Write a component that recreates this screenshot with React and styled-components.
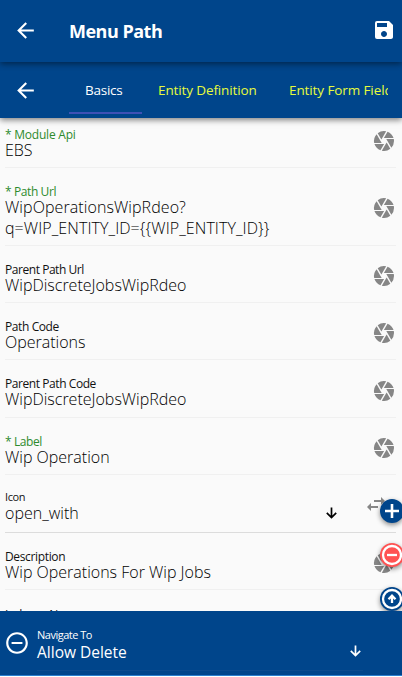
import React from 'react';
import styled, { createGlobalStyle } from 'styled-components';
import { MdArrowBack, MdSave, MdCamera, MdSwapHoriz, MdRemoveCircleOutline } from 'react-icons/md';

const Global = createGlobalStyle`
  * { box-sizing: border-box; }
  body { margin: 0; overflow: hidden; background: #fafafa; font-family: "Open Sans", "Noto Sans", sans-serif; }
  svg { display: block; flex: none; }
`;

const Page = styled.div`
  position: relative;
  display: flex;
  flex-direction: column;
  width: 402px;
  height: 677px;
  overflow: hidden;
  background: #fafafa;
`;

const TopBar = styled.header`
  position: relative;
  z-index: 3;
  flex: none;
  display: flex;
  align-items: center;
  height: 62px;
  padding: 0 6px 2px 13px;
  color: #fff;
  background: #00458b;
  box-shadow: 0 2px 6px rgba(0, 0, 0, 0.45);
`;

const Title = styled.h1`
  flex: 1;
  margin: 2px 0 0 31px;
  font-size: 18px;
  line-height: 24px;
  font-weight: 700;
  letter-spacing: ${(p) => p.$ls}px;
`;

const TabBar = styled.nav`
  position: relative;
  z-index: 2;
  flex: none;
  display: flex;
  align-items: center;
  height: 56px;
  padding-left: 13px;
  color: #fff;
  background: #00458b;
  box-shadow: 0 2px 6px rgba(0, 0, 0, 0.5);
`;

const Tabs = styled.div`
  display: flex;
  width: 319px;
  height: 56px;
  margin-left: 31px;
  overflow: hidden;
`;

const Tab = styled.div`
  flex: none;
  height: 52px;
  padding: 18px 0 0 16px;
  width: ${(p) => p.$w}px;
  font-size: 13.5px;
  line-height: 20px;
  white-space: nowrap;
  letter-spacing: ${(p) => p.$ls}px;
  color: ${(p) => (p.$active ? '#fff' : '#e6fb3c')};
  border-bottom: 2px solid ${(p) => (p.$active ? '#3f51b5' : 'transparent')};
`;

const Form = styled.main`
  flex: 1;
  min-height: 0;
  padding: 0 6px 0 5px;
  overflow: hidden;
`;

const Row = styled.div`
  display: flex;
  align-items: center;
  justify-content: space-between;
  height: ${(p) => p.$h}px;
  padding-top: ${(p) => p.$pt ?? 4}px;
  border-bottom: 1px solid ${(p) => (p.$dark ? '#dcdcdc' : '#f0f0f0')};
`;

const Texts = styled.div`
  align-self: flex-start;
  padding-top: ${(p) => p.$pt ?? 14}px;
`;

const Label = styled.div`
  font-size: ${(p) => p.$size ?? 12}px;
  line-height: ${(p) => p.$h ?? 11}px;
  white-space: nowrap;
  letter-spacing: ${(p) => p.$ls}px;
  color: ${(p) => (p.$required ? '#2e8b2e' : '#111')};
`;

const Value = styled.div`
  font-size: 16px;
  font-weight: 300;
  line-height: 21px;
  white-space: pre;
  letter-spacing: ${(p) => p.$ls}px;
  color: #000;
`;

const CameraIcon = styled(MdCamera)`
  width: 24px;
  height: 24px;
  margin-top: ${(p) => p.$mt ?? 0}px;
  color: #868686;
`;

const SelectIcons = styled.div`
  display: flex;
  align-items: center;
  gap: 25px;
  margin-right: 8px;
  color: #868686;
`;

const SwapIcon = styled(MdSwapHoriz)`
  margin-top: -3px;
`;

const BoldIcon = styled.svg`
  stroke: currentColor;
  fill: none;
  stroke-width: ${(p) => p.$sw ?? 2.3};
`;

const ArrowSvg = styled(BoldIcon)`
  width: 15px;
  height: 15px;
  margin-top: ${(p) => p.$mt ?? 0}px;
  color: ${(p) => p.$color ?? '#000'};
`;

const DownArrow = (props) => (
  <ArrowSvg viewBox="0 0 15 15" $sw={1.7} {...props}>
    <path d="M7.5 2.5v10M2.8 7.8l4.7 4.7 4.7-4.7" />
  </ArrowSvg>
);

const Fab = styled.button`
  position: absolute;
  z-index: 1;
  left: 380px;
  top: ${(p) => p.$top}px;
  display: flex;
  align-items: center;
  justify-content: center;
  width: 24px;
  height: 24px;
  padding: 0;
  border: 0;
  border-radius: 50%;
  color: #fff;
  background: ${(p) => p.$bg};
  box-shadow: 0 2px 5px rgba(0, 0, 0, 0.45);
`;

const Footer = styled.footer`
  position: relative;
  z-index: 2;
  flex: none;
  display: flex;
  height: 65px;
  padding-left: 4px;
  color: #fff;
  background: #00458b;
  border-bottom: 1px solid #2a7fd0;
`;

const FooterIcon = styled.div`
  padding-top: 19px;
  width: 33px;
`;

const FooterField = styled.div`
  display: flex;
  justify-content: space-between;
  width: 326px;
  height: 60px;
  padding-top: 16px;
  border-bottom: 1px solid #0b4b8e;
`;

const FooterLabel = styled.div`
  font-size: 11px;
  line-height: 15px;
  letter-spacing: ${(p) => p.$ls}px;
`;

const FooterValue = styled.div`
  font-size: 15.5px;
  line-height: 20px;
  letter-spacing: ${(p) => p.$ls}px;
`;

const Edge = styled.div`
  flex: none;
  height: 1px;
  background: #fff;
`;

const fields = [
  { label: '* Module Api', value: 'EBS', required: true, h: 50, pt: 0, tpt: 11, ll: -0.22, mt: -4 },
  { label: '* Path Url', value: 'WipOperationsWipRdeo?\nq=WIP_ENTITY_ID={{WIP_ENTITY_ID}}', required: true, h: 78, ll: -0.4, lv: 0.08, mt: -2 },
  { label: 'Parent Path Url', value: 'WipDiscreteJobsWipRdeo', h: 57, ll: -0.45 },
  { label: 'Path Code', value: 'Operations', h: 57, ll: -0.4 },
  { label: 'Parent Path Code', value: 'WipDiscreteJobsWipRdeo', h: 58, ll: -0.43 },
  { label: '* Label', value: 'Wip Operation', required: true, h: 57, ll: -0.4 },
  { label: 'Icon', value: 'open_with', h: 58, select: true, ll: -0.4, tpt: 11 },
  { label: 'Description', value: 'Wip Operations For Wip Jobs', h: 57, ll: -0.35 },
  { label: 'Indexes Name', value: '', h: 57, last: true, ll: -0.3, tpt: 15 },
];

export default function App() {
  return (
    <Page>
      <Global />
      <TopBar>
        <MdArrowBack size={25} />
        <Title $ls={-0.5}>Menu Path</Title>
        <MdSave size={24} />
      </TopBar>
      <TabBar>
        <MdArrowBack size={25} />
        <Tabs>
          <Tab $w={73} $active $ls={-0.25}>Basics</Tab>
          <Tab $w={131} $ls={-0.12}>Entity Definition</Tab>
          <Tab $w={160} $ls={-0.1}>Entity Form Fields</Tab>
        </Tabs>
      </TabBar>
      <Form>
        {fields.map((f) => (
          <Row key={f.label} $h={f.h} $pt={f.pt} $dark={f.select}>
            <Texts $pt={f.tpt}>
              <Label $required={f.required} $size={f.select ? 11 : 12} $h={f.select ? 13 : 11} $ls={f.ll}>{f.label}</Label>
              <Value $ls={f.lv ?? 0}>{f.value}</Value>
            </Texts>
            {f.select ? (
              <SelectIcons><DownArrow $mt={14} /><SwapIcon size={24} /></SelectIcons>
            ) : !f.last && <CameraIcon $mt={f.mt} />}
          </Row>
        ))}
      </Form>
      <Fab $top={499} $bg="#00458b">
        <BoldIcon width="24" height="24" viewBox="0 0 24 24" $sw={2.6}><path d="M12 5v14M5 12h14" /></BoldIcon>
      </Fab>
      <Fab $top={543} $bg="#ff5252">
        <BoldIcon width="24" height="24" viewBox="0 0 24 24"><circle cx="12" cy="12" r="9" /><path d="M7 12h10" /></BoldIcon>
      </Fab>
      <Fab $top={587} $bg="#00458b">
        <BoldIcon width="24" height="24" viewBox="0 0 24 24"><circle cx="12" cy="12" r="9" /><path d="M12 16v-6M8.5 12.2l3.5-3.5 3.5 3.5" /></BoldIcon>
      </Fab>
      <Footer>
        <FooterIcon><MdRemoveCircleOutline size={26} /></FooterIcon>
        <FooterField>
          <div>
            <FooterLabel $ls={-0.5}>Navigate To</FooterLabel>
            <FooterValue $ls={0}>Allow Delete</FooterValue>
          </div>
          <DownArrow $mt={16} $color="#fff" />
        </FooterField>
      </Footer>
      <Edge />
    </Page>
  );
}
